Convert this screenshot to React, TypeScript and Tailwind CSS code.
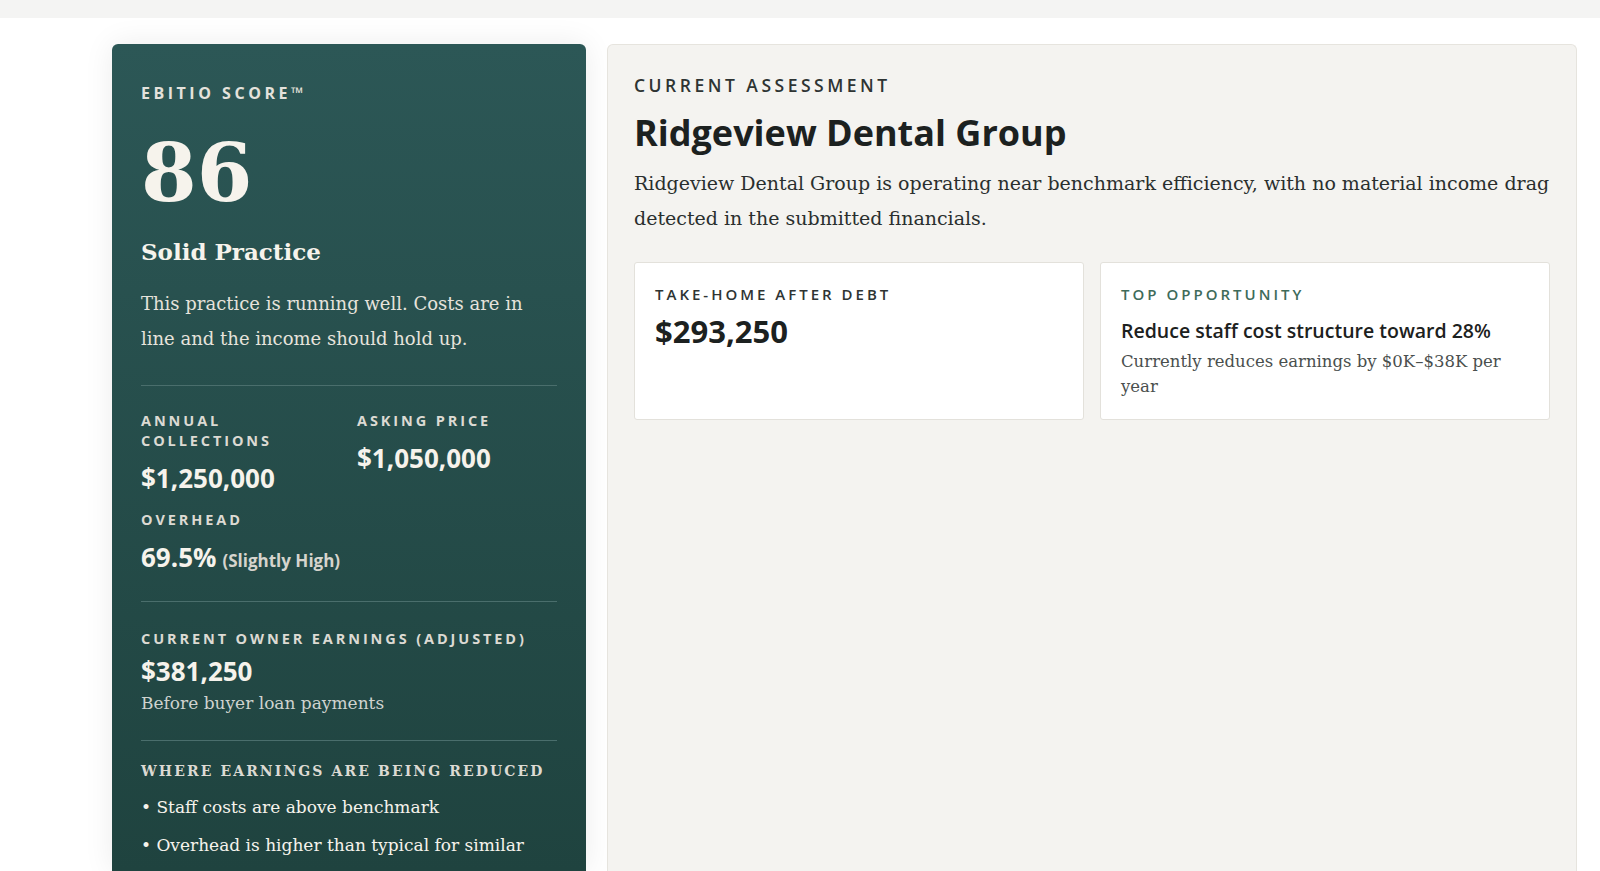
export default function App() {
  const serif = { fontFamily: '"DejaVu Serif", "Liberation Serif", serif' };
  const sans = { fontFamily: '"Open Sans", "Noto Sans", sans-serif' };
  return (
    <div className="w-[1600px] h-[871px] overflow-hidden bg-[#f7f7f6]" style={sans}>
      <div className="h-[18px] bg-[#f4f4f3]" />
      <div className="h-[853px] bg-white flex gap-[21px] pl-[112px] pt-[26px] pr-[23px]">
        <div className="w-[474px] shrink-0 rounded-t-[6px] bg-gradient-to-b from-[#2c5756] to-[#1f433f] px-[29px] pt-[37px] text-[#f6f3ec] shadow-[0_0_30px_rgba(0,0,0,0.08)]">
          <div className="text-[16px] font-bold tracking-[0.22em] text-[#e4e2dc]">EBITIO SCORE™</div>
          <div className="text-[80px] font-bold leading-none mt-[28px]" style={serif}>86</div>
          <div className="text-[23px] font-bold mt-[22px]" style={serif}>Solid Practice</div>
          <p className="text-[18px] leading-[35px] mt-[16px] text-[#e6e3dc]" style={serif}>This practice is running well. Costs are in line and the income should hold up.</p>
          <div className="h-px bg-[#4a6e6c] mt-[29px]" />
          <div className="grid grid-cols-2 gap-x-4 mt-[25px]">
            <div>
              <div className="text-[14.5px] font-bold tracking-[0.2em] leading-[20px] text-[#dcdad3]">ANNUAL<br />COLLECTIONS</div>
              <div className="text-[26px] font-bold mt-[8px]">$1,250,000</div>
            </div>
            <div>
              <div className="text-[14.5px] font-bold tracking-[0.2em] leading-[20px] text-[#dcdad3]">ASKING PRICE</div>
              <div className="text-[26px] font-bold mt-[8px]">$1,050,000</div>
            </div>
          </div>
          <div className="text-[14.5px] font-bold tracking-[0.2em] leading-[20px] text-[#dcdad3] mt-[12px]">OVERHEAD</div>
          <div className="mt-[8px] flex items-baseline gap-[6px]">
            <span className="text-[26px] font-bold">69.5%</span>
            <span className="text-[17px] font-bold text-[#d6d4cd]">(Slightly High)</span>
          </div>
          <div className="h-px bg-[#4a6e6c] mt-[24px]" />
          <div className="text-[14.5px] font-bold tracking-[0.2em] leading-[20px] text-[#dcdad3] mt-[27px]">CURRENT OWNER EARNINGS (ADJUSTED)</div>
          <div className="text-[26px] font-bold mt-[4px] leading-[36px]">$381,250</div>
          <div className="text-[17px] text-[#cfd3cf] mt-[2px]" style={serif}>Before buyer loan payments</div>
          <div className="h-px bg-[#4a6e6c] mt-[24px]" />
          <div className="text-[14px] font-bold tracking-[0.15em] leading-[20px] text-[#dcdad3] mt-[20px]" style={serif}>WHERE EARNINGS ARE BEING REDUCED</div>
          <div className="text-[17px] mt-[14px]" style={serif}>• Staff costs are above benchmark</div>
          <div className="text-[17px] mt-[12px]" style={serif}>• Overhead is higher than typical for similar</div>
        </div>
        <div className="flex-1 rounded-t-[6px] border border-[#e6e4de] border-b-0 bg-[#f4f3f0] px-[26px] pt-[27px]">
          <div className="text-[17.5px] font-semibold tracking-[0.2em] text-[#2e3433]">CURRENT ASSESSMENT</div>
          <div className="text-[36px] font-bold text-[#1c2120] mt-[8px]">Ridgeview Dental Group</div>
          <p className="text-[19px] leading-[35px] text-[#2a2f2e] mt-[6px]" style={serif}>Ridgeview Dental Group is operating near benchmark efficiency, with no material income drag detected in the submitted financials.</p>
          <div className="grid grid-cols-2 gap-[16px] mt-[26px]">
            <div className="h-[158px] bg-white border border-[#e3e1db] rounded-[3px] px-[20px] pt-[20px]">
              <div className="text-[15px] font-semibold tracking-[0.2em] text-[#2e3433]">TAKE-HOME AFTER DEBT</div>
              <div className="text-[31px] font-bold text-[#1c2120] mt-[2px]">$293,250</div>
            </div>
            <div className="h-[158px] bg-white border border-[#e3e1db] rounded-[3px] px-[20px] pt-[20px]">
              <div className="text-[15px] font-semibold tracking-[0.2em] text-[#3e6b5a]">TOP OPPORTUNITY</div>
              <div className="text-[19.5px] font-semibold text-[#1c2120] mt-[10px]">Reduce staff cost structure toward 28%</div>
              <div className="text-[16.5px] leading-[25px] text-[#4a4f4e] mt-[4px] pr-[20px]" style={serif}>Currently reduces earnings by $0K–$38K per year</div>
            </div>
          </div>
        </div>
      </div>
    </div>
  );
}
